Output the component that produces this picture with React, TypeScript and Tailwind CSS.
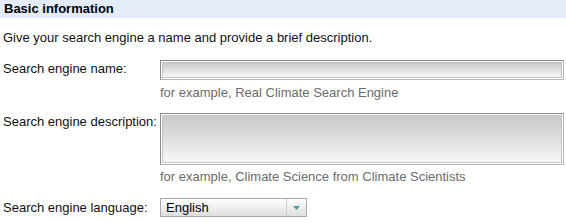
import React from "react";

const Field = ({ height }: { height: string }) => (
  <div className={`w-[404px] ${height} border border-[#8a8a8a] border-r-[#b5b5b5] border-b-[#b5b5b5] bg-white p-px`}>
    <div className="h-full w-full border border-[#c4c4c4] bg-linear-to-b from-[#c9c9c9] to-[#f6f6f6]" />
  </div>
);

const App = () => {
  return (
    <div className="w-[566px] h-[222px] bg-white text-[13px] leading-[16px] text-[#111] font-['Liberation_Sans',Arial,sans-serif] overflow-hidden">
      <div className="h-[18px] bg-[#e5ecf9] pl-1 pt-px font-bold text-black">Basic information</div>

      <p className="mt-[12px] pl-[3px]">Give your search engine a name and provide a brief description.</p>

      <div className="mt-[14px] flex">
        <label className="w-[160px] shrink-0 pl-[3px] pt-[1px]">Search engine name:</label>
        <div className="flex flex-col">
          <Field height="h-[20px]" />
          <span className="mt-[5px] text-[#6b6b6b]">for example, Real Climate Search Engine</span>
        </div>
      </div>

      <div className="mt-[12px] flex">
        <label className="w-[160px] shrink-0 pl-[3px] pt-[1px]">Search engine description:</label>
        <div className="flex flex-col">
          <Field height="h-[52px]" />
          <span className="mt-[4px] text-[#6b6b6b]">for example, Climate Science from Climate Scientists</span>
        </div>
      </div>

      <div className="mt-[13px] flex items-center">
        <label className="w-[160px] shrink-0 pl-[3px]">Search engine language:</label>
        <div className="flex h-[19px] w-[147px] items-stretch border border-[#a8a8a8] bg-linear-to-b from-white to-[#dedede]">
          <span className="flex-1 pl-[5px] leading-[17px] text-black">English</span>
          <span className="flex w-[20px] items-center justify-center border-l border-[#cfcfcf]">
            <svg width="7" height="4" viewBox="0 0 7 4">
              <path d="M0 0 H7 L3.5 4 Z" fill="#4f9aa6" />
            </svg>
          </span>
        </div>
      </div>
    </div>
  );
};

export default App;
